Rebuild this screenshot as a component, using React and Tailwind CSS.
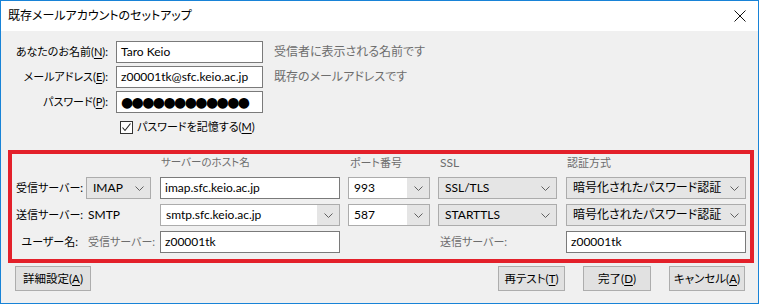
import React from "react";

const FONT = { fontFamily: 'Lato, "Noto Sans CJK JP", sans-serif', fontFeatureSettings: '"palt"' };

function Chevron() {
  return (
    <svg width="9" height="5" viewBox="0 0 9 5" className="shrink-0">
      <polyline points="0.5,0.5 4.5,4.5 8.5,0.5" fill="none" stroke="#606060" strokeWidth="1" />
    </svg>
  );
}

function Mn({ k }) {
  return (
    <>
      (<span className="underline underline-offset-2">{k}</span>)
    </>
  );
}

// read-only dropdown (grey face)
function Select({ w, children }) {
  return (
    <div className={`${w} h-[22px] flex items-center justify-between bg-[#e5e5e5] border border-[#acacac] pl-[6px] pr-[6px]`}>
      <span className="text-[12px] text-black">{children}</span>
      <Chevron />
    </div>
  );
}

// editable combo: white field + grey drop button
function Combo({ w, children }) {
  return (
    <div className={`${w} h-[22px] flex border border-[#acacac] bg-white`}>
      <div className="flex-1 flex items-center pl-[5px] text-[12px] text-black">{children}</div>
      <div className="w-[22px] flex items-center justify-center bg-[#e5e5e5]">
        <Chevron />
      </div>
    </div>
  );
}

function Field({ w, children }) {
  return (
    <div className={`${w} h-[22px] flex items-center bg-white border border-[#7a7a7a] pl-[4px] text-[12px] text-black overflow-hidden`}>
      {children}
    </div>
  );
}

function Btn({ w, children }) {
  return (
    <div className={`${w} h-[25px] flex items-center justify-center bg-[#e1e1e1] border border-[#adadad] text-[11.5px] text-black`}>
      {children}
    </div>
  );
}

export default function App() {
  return (
    <div className="w-[759px] h-[304px] border border-[#1883d7] bg-[#f0f0f0] flex flex-col overflow-hidden whitespace-nowrap" style={FONT}>
      {/* title bar */}
      <div className="h-[30px] bg-white flex items-center justify-between pl-[7px] pr-[12px] shrink-0">
        <span className="text-[12px] text-black">既存メールアカウントのセットアップ</span>
        <svg width="12" height="12" viewBox="0 0 12 12">
          <path d="M0.5 0.5 L11.5 11.5 M11.5 0.5 L0.5 11.5" stroke="#111" strokeWidth="1" />
        </svg>
      </div>

      {/* identity */}
      <div className="pt-[10px] grid grid-cols-[107px_147px_auto] gap-x-[8px] gap-y-[3px] items-center text-[11px]">
        <div className="text-right">
          あなたのお名前<Mn k="N" />:
        </div>
        <Field w="w-[147px]">Taro Keio</Field>
        <div className="pl-[3px] text-[12px] text-[#6d6d6d]">受信者に表示される名前です</div>

        <div className="text-right">
          メールアドレス<Mn k="E" />:
        </div>
        <Field w="w-[147px]">z00001tk@sfc.keio.ac.jp</Field>
        <div className="pl-[3px] text-[12px] text-[#6d6d6d]">既存のメールアドレスです</div>

        <div className="text-right">
          パスワード<Mn k="P" />:
        </div>
        <Field w="w-[147px]">
          <span className="text-[14px] tracking-[-1.6px] leading-none" style={{ fontFamily: '"DejaVu Sans", sans-serif' }}>
            ●●●●●●●●●●●●
          </span>
        </Field>
        <div />
      </div>

      <div className="pl-[119px] mt-[7px] h-[14px] flex items-center gap-[4px] text-[11px]">
        <div className="w-[13px] h-[13px] bg-white border border-[#333] flex items-center justify-center">
          <svg width="11" height="11" viewBox="0 0 11 11">
            <polyline points="1.5,5.5 4,8.5 9.5,1.5" fill="none" stroke="#222" strokeWidth="1.1" />
          </svg>
        </div>
        <span>
          パスワードを記憶する<Mn k="M" />
        </span>
      </div>

      {/* server settings */}
      <div className="ml-[7px] mr-[4px] mt-[16px] border-4 border-[#e3202a] pb-[6px] grid grid-cols-[70px_74px_188px_90px_128px_180px] grid-rows-[18px_22px_22px_22px] gap-y-[5px] pl-[4px] items-center text-[11px]">
        <div />
        <div />
        <div className="text-[#6d6d6d] pl-[1px] text-[10.5px]">サーバーのホスト名</div>
        <div className="text-[#6d6d6d] pl-[2px]">ポート番号</div>
        <div className="text-[#6d6d6d] pl-[2px] text-[12px]">SSL</div>
        <div className="text-[#6d6d6d] pl-[1px]">認証方式</div>

        <div>受信サーバー:</div>
        <Select w="w-[65px]">IMAP</Select>
        <Field w="w-[180px]">imap.sfc.keio.ac.jp</Field>
        <Combo w="w-[82px]">993</Combo>
        <Select w="w-[119px]">SSL/TLS</Select>
        <Select w="w-[180px]">暗号化されたパスワード認証</Select>

        <div>送信サーバー:</div>
        <div className="pl-[2px] text-[12px]">SMTP</div>
        <Combo w="w-[180px]">smtp.sfc.keio.ac.jp</Combo>
        <Combo w="w-[82px]">587</Combo>
        <Select w="w-[119px]">STARTTLS</Select>
        <Select w="w-[180px]">暗号化されたパスワード認証</Select>

        <div className="pr-[8px] text-right">ユーザー名:</div>
        <div className="pl-[2px] text-[#6d6d6d]">受信サーバー:</div>
        <Field w="w-[180px]">z00001tk</Field>
        <div />
        <div className="pl-[2px] text-[#6d6d6d]">送信サーバー:</div>
        <Field w="w-[180px]">z00001tk</Field>
      </div>

      {/* buttons */}
      <div className="mt-[3px] pl-[14px] pr-[13px] flex items-center">
        <Btn w="w-[76px]">
          詳細設定<Mn k="A" />
        </Btn>
        <div className="ml-auto flex gap-[18px]">
          <Btn w="w-[67px]">
            再テスト<Mn k="T" />
          </Btn>
          <Btn w="w-[68px]">
            完了<Mn k="D" />
          </Btn>
          <Btn w="w-[76px]">
            キャンセル<Mn k="A" />
          </Btn>
        </div>
      </div>
    </div>
  );
}
